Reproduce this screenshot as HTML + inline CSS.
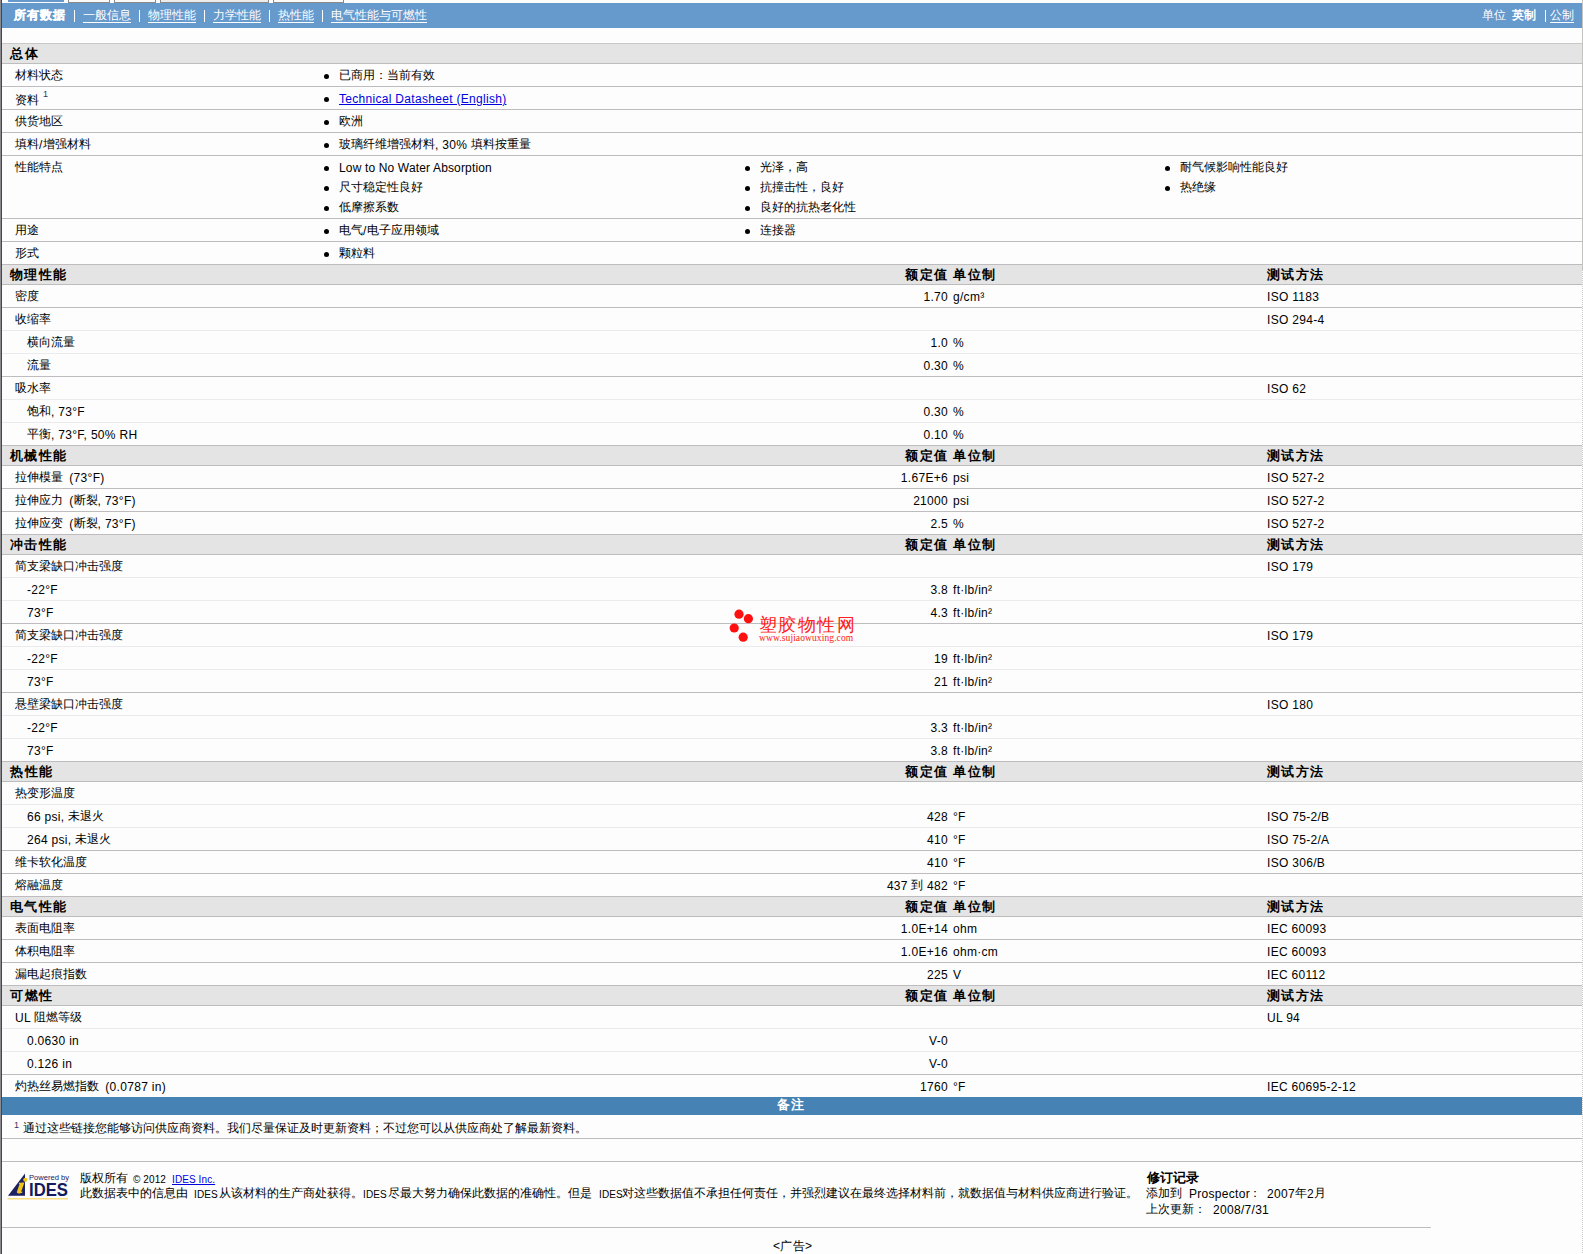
<!DOCTYPE html><html><head><meta charset="utf-8"><style>
*{margin:0;padding:0}
html,body{width:1583px;height:1254px;overflow:hidden;background:#fcfdfc}
body{position:relative;font-family:"Liberation Sans",sans-serif;font-size:12px;color:#000}
body>div,body>svg{position:absolute}
.t{white-space:nowrap;letter-spacing:0.3px;box-sizing:border-box;padding-top:1px}
.c{display:inline-block;font-weight:inherit;color:#000;letter-spacing:0;position:relative;top:-1px;text-align:justify;text-align-last:justify}
.nw,.nw .c{color:#fff}
.b{font-weight:bold}
.nbold .c{letter-spacing:1px;-webkit-text-stroke:0.4px #fff}
.u{text-decoration:underline;text-underline-offset:2px}
.u .c{text-decoration:underline;text-underline-offset:3px}
.sm{font-size:10px;letter-spacing:0.1px}
a .c{color:inherit}
.hb{font-weight:bold;font-size:13px;letter-spacing:1px}
.hb .c{color:#000}
.nb,.nb .c{color:#fff;font-weight:bold;font-size:13px;letter-spacing:1px}
a{color:#0000e0;text-decoration:underline}
.sup{font-size:9px;line-height:9px;color:#333366}
.dot{width:5px;height:5px;border-radius:50%;background:#000}
.wm{font-size:18px;line-height:18px;color:#ff2020;letter-spacing:1.4px;font-weight:normal}
.wm .c{top:0;letter-spacing:1px}
.wm .c{color:#ff2020}
.wm2{font-family:"Liberation Serif",serif;font-size:9.5px;line-height:10px;color:#ff2020;letter-spacing:0.1px}
</style></head><body>
<div style="left:8px;top:0px;width:56px;height:2px;background:#6699cc"></div>
<div style="left:68px;top:-8px;width:40px;height:10px;border:1px solid #8a8a8a;border-top:0;background:#fbfbfb"></div>
<div style="left:114px;top:-8px;width:40px;height:10px;border:1px solid #8a8a8a;border-top:0;background:#fbfbfb"></div>
<div style="left:160px;top:-8px;width:107px;height:10px;border:1px solid #8a8a8a;border-top:0;background:#ececec"></div>
<div style="left:273px;top:-8px;width:69px;height:10px;border:1px solid #8a8a8a;border-top:0;background:#fbfbfb"></div>
<div style="left:2px;top:3px;width:1580px;height:25px;background:#6699cc"></div>
<div class="t nw b nbold" style="left:14px;top:3px;height:25px;line-height:25px;"><b class="c" style="width:52px">所有数据</b></div>
<div style="left:74px;top:10px;width:1px;height:12px;background:#ffffff"></div>
<div style="left:139px;top:10px;width:1px;height:12px;background:#ffffff"></div>
<div style="left:204px;top:10px;width:1px;height:12px;background:#ffffff"></div>
<div style="left:269px;top:10px;width:1px;height:12px;background:#ffffff"></div>
<div style="left:322px;top:10px;width:1px;height:12px;background:#ffffff"></div>
<div class="t nw u" style="left:83px;top:3px;height:25px;line-height:25px;"><b class="c" style="width:48px">一般信息</b></div>
<div class="t nw u" style="left:148px;top:3px;height:25px;line-height:25px;"><b class="c" style="width:48px">物理性能</b></div>
<div class="t nw u" style="left:213px;top:3px;height:25px;line-height:25px;"><b class="c" style="width:48px">力学性能</b></div>
<div class="t nw u" style="left:278px;top:3px;height:25px;line-height:25px;"><b class="c" style="width:36px">热性能</b></div>
<div class="t nw u" style="left:331px;top:3px;height:25px;line-height:25px;"><b class="c" style="width:96px">电气性能与可燃性</b></div>
<div class="t nw" style="left:1482px;top:3px;height:25px;line-height:25px;"><b class="c" style="width:24px">单位</b></div>
<div class="t nw b" style="left:1512px;top:3px;height:25px;line-height:25px;"><b class="c" style="width:24px">英制</b></div>
<div style="left:1545px;top:10px;width:1px;height:12px;background:#ffffff"></div>
<div class="t nw u" style="left:1550px;top:3px;height:25px;line-height:25px;"><b class="c" style="width:24px">公制</b></div>
<div style="left:2px;top:43px;width:1580px;height:1px;background:#c8c9c6"></div>
<div style="left:2px;top:44px;width:1580px;height:19px;background:#e3e4e3"></div>
<div class="t hb" style="left:10px;top:44px;height:19px;line-height:19px;"><b class="c" style="width:28px">总体</b></div>
<div style="left:2px;top:63px;width:1580px;height:1px;background:#bdbdbd"></div>
<div class="t" style="left:15px;top:65px;height:20px;line-height:20px;"><b class="c" style="width:48px">材料状态</b></div>
<div class="dot" style="left:324px;top:74px"></div>
<div class="t" style="left:339px;top:65px;height:20px;line-height:20px;"><b class="c" style="width:96px">已商用：当前有效</b></div>
<div style="left:2px;top:86px;width:1580px;height:1px;background:#bebcbe"></div>
<div class="t" style="left:15px;top:90px;height:20px;line-height:20px;"><b class="c" style="width:24px">资料</b></div>
<div class="t sup" style="left:43px;top:89px">1</div>
<div class="dot" style="left:324px;top:97px"></div>
<div class="t" style="left:339px;top:88px;height:20px;line-height:20px;"><a>Technical Datasheet (English)</a></div>
<div style="left:2px;top:109px;width:1580px;height:1px;background:#bebcbe"></div>
<div class="t" style="left:15px;top:111px;height:20px;line-height:20px;"><b class="c" style="width:48px">供货地区</b></div>
<div class="dot" style="left:324px;top:120px"></div>
<div class="t" style="left:339px;top:111px;height:20px;line-height:20px;"><b class="c" style="width:24px">欧洲</b></div>
<div style="left:2px;top:132px;width:1580px;height:1px;background:#bebcbe"></div>
<div class="t" style="left:15px;top:134px;height:20px;line-height:20px;"><b class="c" style="width:24px">填料</b>/<b class="c" style="width:48px">增强材料</b></div>
<div class="dot" style="left:324px;top:143px"></div>
<div class="t" style="left:339px;top:134px;height:20px;line-height:20px;"><b class="c" style="width:96px">玻璃纤维增强材料</b>, 30% <b class="c" style="width:60px">填料按重量</b></div>
<div style="left:2px;top:155px;width:1580px;height:1px;background:#bebcbe"></div>
<div class="t" style="left:15px;top:157px;height:20px;line-height:20px;"><b class="c" style="width:48px">性能特点</b></div>
<div class="dot" style="left:324px;top:166px"></div>
<div class="t" style="left:339px;top:157px;height:20px;line-height:20px;"><span style="letter-spacing:0.15px">Low to No Water Absorption</span></div>
<div class="dot" style="left:324px;top:186px"></div>
<div class="t" style="left:339px;top:177px;height:20px;line-height:20px;"><b class="c" style="width:84px">尺寸稳定性良好</b></div>
<div class="dot" style="left:324px;top:206px"></div>
<div class="t" style="left:339px;top:197px;height:20px;line-height:20px;"><b class="c" style="width:60px">低摩擦系数</b></div>
<div class="dot" style="left:745px;top:166px"></div>
<div class="t" style="left:760px;top:157px;height:20px;line-height:20px;"><b class="c" style="width:48px">光泽，高</b></div>
<div class="dot" style="left:745px;top:186px"></div>
<div class="t" style="left:760px;top:177px;height:20px;line-height:20px;"><b class="c" style="width:84px">抗撞击性，良好</b></div>
<div class="dot" style="left:745px;top:206px"></div>
<div class="t" style="left:760px;top:197px;height:20px;line-height:20px;"><b class="c" style="width:96px">良好的抗热老化性</b></div>
<div class="dot" style="left:1165px;top:166px"></div>
<div class="t" style="left:1180px;top:157px;height:20px;line-height:20px;"><b class="c" style="width:108px">耐气候影响性能良好</b></div>
<div class="dot" style="left:1165px;top:186px"></div>
<div class="t" style="left:1180px;top:177px;height:20px;line-height:20px;"><b class="c" style="width:36px">热绝缘</b></div>
<div style="left:2px;top:218px;width:1580px;height:1px;background:#bebcbe"></div>
<div class="t" style="left:15px;top:220px;height:20px;line-height:20px;"><b class="c" style="width:24px">用途</b></div>
<div class="dot" style="left:324px;top:229px"></div>
<div class="t" style="left:339px;top:220px;height:20px;line-height:20px;"><b class="c" style="width:24px">电气</b>/<b class="c" style="width:72px">电子应用领域</b></div>
<div class="dot" style="left:745px;top:229px"></div>
<div class="t" style="left:760px;top:220px;height:20px;line-height:20px;"><b class="c" style="width:36px">连接器</b></div>
<div style="left:2px;top:241px;width:1580px;height:1px;background:#bebcbe"></div>
<div class="t" style="left:15px;top:243px;height:20px;line-height:20px;"><b class="c" style="width:24px">形式</b></div>
<div class="dot" style="left:324px;top:252px"></div>
<div class="t" style="left:339px;top:243px;height:20px;line-height:20px;"><b class="c" style="width:36px">颗粒料</b></div>
<div style="left:2px;top:264px;width:1580px;height:1px;background:#bebcbe"></div>
<div style="left:2px;top:265px;width:1580px;height:19px;background:#e3e4e3"></div>
<div class="t hb" style="left:10px;top:265px;height:19px;line-height:19px;"><b class="c" style="width:56px">物理性能</b></div>
<div class="t hb" style="right:636px;top:265px;height:19px;line-height:19px;"><b class="c" style="width:42px">额定值</b></div>
<div class="t hb" style="left:953px;top:265px;height:19px;line-height:19px;"><b class="c" style="width:42px">单位制</b></div>
<div class="t hb" style="left:1267px;top:265px;height:19px;line-height:19px;"><b class="c" style="width:56px">测试方法</b></div>
<div style="left:2px;top:284px;width:1580px;height:1px;background:#bdbdbd"></div>
<div class="t" style="left:15px;top:285px;height:22px;line-height:22px;"><b class="c" style="width:24px">密度</b></div>
<div class="t" style="right:635px;top:285px;height:22px;line-height:22px;">1.70</div>
<div class="t" style="left:953px;top:285px;height:22px;line-height:22px;">g/cm³</div>
<div class="t" style="left:1267px;top:285px;height:22px;line-height:22px;">ISO 1183</div>
<div style="left:2px;top:307px;width:1580px;height:1px;background:#bebcbe"></div>
<div class="t" style="left:15px;top:308px;height:22px;line-height:22px;"><b class="c" style="width:36px">收缩率</b></div>
<div class="t" style="left:1267px;top:308px;height:22px;line-height:22px;">ISO 294-4</div>
<div style="left:2px;top:330px;width:1580px;height:1px;background:#ebeaec"></div>
<div class="t" style="left:27px;top:331px;height:22px;line-height:22px;"><b class="c" style="width:48px">横向流量</b></div>
<div class="t" style="right:635px;top:331px;height:22px;line-height:22px;">1.0</div>
<div class="t" style="left:953px;top:331px;height:22px;line-height:22px;">%</div>
<div style="left:2px;top:353px;width:1580px;height:1px;background:#ebeaec"></div>
<div class="t" style="left:27px;top:354px;height:22px;line-height:22px;"><b class="c" style="width:24px">流量</b></div>
<div class="t" style="right:635px;top:354px;height:22px;line-height:22px;">0.30</div>
<div class="t" style="left:953px;top:354px;height:22px;line-height:22px;">%</div>
<div style="left:2px;top:376px;width:1580px;height:1px;background:#bebcbe"></div>
<div class="t" style="left:15px;top:377px;height:22px;line-height:22px;"><b class="c" style="width:36px">吸水率</b></div>
<div class="t" style="left:1267px;top:377px;height:22px;line-height:22px;">ISO 62</div>
<div style="left:2px;top:399px;width:1580px;height:1px;background:#ebeaec"></div>
<div class="t" style="left:27px;top:400px;height:22px;line-height:22px;"><b class="c" style="width:24px">饱和</b>, 73°F</div>
<div class="t" style="right:635px;top:400px;height:22px;line-height:22px;">0.30</div>
<div class="t" style="left:953px;top:400px;height:22px;line-height:22px;">%</div>
<div style="left:2px;top:422px;width:1580px;height:1px;background:#ebeaec"></div>
<div class="t" style="left:27px;top:423px;height:22px;line-height:22px;"><b class="c" style="width:24px">平衡</b>, 73°F, 50% RH</div>
<div class="t" style="right:635px;top:423px;height:22px;line-height:22px;">0.10</div>
<div class="t" style="left:953px;top:423px;height:22px;line-height:22px;">%</div>
<div style="left:2px;top:445px;width:1580px;height:1px;background:#bebcbe"></div>
<div style="left:2px;top:446px;width:1580px;height:19px;background:#e3e4e3"></div>
<div class="t hb" style="left:10px;top:446px;height:19px;line-height:19px;"><b class="c" style="width:56px">机械性能</b></div>
<div class="t hb" style="right:636px;top:446px;height:19px;line-height:19px;"><b class="c" style="width:42px">额定值</b></div>
<div class="t hb" style="left:953px;top:446px;height:19px;line-height:19px;"><b class="c" style="width:42px">单位制</b></div>
<div class="t hb" style="left:1267px;top:446px;height:19px;line-height:19px;"><b class="c" style="width:56px">测试方法</b></div>
<div style="left:2px;top:465px;width:1580px;height:1px;background:#bdbdbd"></div>
<div class="t" style="left:15px;top:466px;height:22px;line-height:22px;"><b class="c" style="width:48px">拉伸模量</b> (73°F)</div>
<div class="t" style="right:635px;top:466px;height:22px;line-height:22px;">1.67E+6</div>
<div class="t" style="left:953px;top:466px;height:22px;line-height:22px;">psi</div>
<div class="t" style="left:1267px;top:466px;height:22px;line-height:22px;">ISO 527-2</div>
<div style="left:2px;top:488px;width:1580px;height:1px;background:#bebcbe"></div>
<div class="t" style="left:15px;top:489px;height:22px;line-height:22px;"><b class="c" style="width:48px">拉伸应力</b> (<b class="c" style="width:24px">断裂</b>, 73°F)</div>
<div class="t" style="right:635px;top:489px;height:22px;line-height:22px;">21000</div>
<div class="t" style="left:953px;top:489px;height:22px;line-height:22px;">psi</div>
<div class="t" style="left:1267px;top:489px;height:22px;line-height:22px;">ISO 527-2</div>
<div style="left:2px;top:511px;width:1580px;height:1px;background:#bebcbe"></div>
<div class="t" style="left:15px;top:512px;height:22px;line-height:22px;"><b class="c" style="width:48px">拉伸应变</b> (<b class="c" style="width:24px">断裂</b>, 73°F)</div>
<div class="t" style="right:635px;top:512px;height:22px;line-height:22px;">2.5</div>
<div class="t" style="left:953px;top:512px;height:22px;line-height:22px;">%</div>
<div class="t" style="left:1267px;top:512px;height:22px;line-height:22px;">ISO 527-2</div>
<div style="left:2px;top:534px;width:1580px;height:1px;background:#bebcbe"></div>
<div style="left:2px;top:535px;width:1580px;height:19px;background:#e3e4e3"></div>
<div class="t hb" style="left:10px;top:535px;height:19px;line-height:19px;"><b class="c" style="width:56px">冲击性能</b></div>
<div class="t hb" style="right:636px;top:535px;height:19px;line-height:19px;"><b class="c" style="width:42px">额定值</b></div>
<div class="t hb" style="left:953px;top:535px;height:19px;line-height:19px;"><b class="c" style="width:42px">单位制</b></div>
<div class="t hb" style="left:1267px;top:535px;height:19px;line-height:19px;"><b class="c" style="width:56px">测试方法</b></div>
<div style="left:2px;top:554px;width:1580px;height:1px;background:#bdbdbd"></div>
<div class="t" style="left:15px;top:555px;height:22px;line-height:22px;"><b class="c" style="width:108px">简支梁缺口冲击强度</b></div>
<div class="t" style="left:1267px;top:555px;height:22px;line-height:22px;">ISO 179</div>
<div style="left:2px;top:577px;width:1580px;height:1px;background:#ebeaec"></div>
<div class="t" style="left:27px;top:578px;height:22px;line-height:22px;">-22°F</div>
<div class="t" style="right:635px;top:578px;height:22px;line-height:22px;">3.8</div>
<div class="t" style="left:953px;top:578px;height:22px;line-height:22px;">ft·lb/in²</div>
<div style="left:2px;top:600px;width:1580px;height:1px;background:#ebeaec"></div>
<div class="t" style="left:27px;top:601px;height:22px;line-height:22px;">73°F</div>
<div class="t" style="right:635px;top:601px;height:22px;line-height:22px;">4.3</div>
<div class="t" style="left:953px;top:601px;height:22px;line-height:22px;">ft·lb/in²</div>
<div style="left:2px;top:623px;width:1580px;height:1px;background:#bebcbe"></div>
<div class="t" style="left:15px;top:624px;height:22px;line-height:22px;"><b class="c" style="width:108px">简支梁缺口冲击强度</b></div>
<div class="t" style="left:1267px;top:624px;height:22px;line-height:22px;">ISO 179</div>
<div style="left:2px;top:646px;width:1580px;height:1px;background:#ebeaec"></div>
<div class="t" style="left:27px;top:647px;height:22px;line-height:22px;">-22°F</div>
<div class="t" style="right:635px;top:647px;height:22px;line-height:22px;">19</div>
<div class="t" style="left:953px;top:647px;height:22px;line-height:22px;">ft·lb/in²</div>
<div style="left:2px;top:669px;width:1580px;height:1px;background:#ebeaec"></div>
<div class="t" style="left:27px;top:670px;height:22px;line-height:22px;">73°F</div>
<div class="t" style="right:635px;top:670px;height:22px;line-height:22px;">21</div>
<div class="t" style="left:953px;top:670px;height:22px;line-height:22px;">ft·lb/in²</div>
<div style="left:2px;top:692px;width:1580px;height:1px;background:#bebcbe"></div>
<div class="t" style="left:15px;top:693px;height:22px;line-height:22px;"><b class="c" style="width:108px">悬壁梁缺口冲击强度</b></div>
<div class="t" style="left:1267px;top:693px;height:22px;line-height:22px;">ISO 180</div>
<div style="left:2px;top:715px;width:1580px;height:1px;background:#ebeaec"></div>
<div class="t" style="left:27px;top:716px;height:22px;line-height:22px;">-22°F</div>
<div class="t" style="right:635px;top:716px;height:22px;line-height:22px;">3.3</div>
<div class="t" style="left:953px;top:716px;height:22px;line-height:22px;">ft·lb/in²</div>
<div style="left:2px;top:738px;width:1580px;height:1px;background:#ebeaec"></div>
<div class="t" style="left:27px;top:739px;height:22px;line-height:22px;">73°F</div>
<div class="t" style="right:635px;top:739px;height:22px;line-height:22px;">3.8</div>
<div class="t" style="left:953px;top:739px;height:22px;line-height:22px;">ft·lb/in²</div>
<div style="left:2px;top:761px;width:1580px;height:1px;background:#bebcbe"></div>
<div style="left:2px;top:762px;width:1580px;height:19px;background:#e3e4e3"></div>
<div class="t hb" style="left:10px;top:762px;height:19px;line-height:19px;"><b class="c" style="width:42px">热性能</b></div>
<div class="t hb" style="right:636px;top:762px;height:19px;line-height:19px;"><b class="c" style="width:42px">额定值</b></div>
<div class="t hb" style="left:953px;top:762px;height:19px;line-height:19px;"><b class="c" style="width:42px">单位制</b></div>
<div class="t hb" style="left:1267px;top:762px;height:19px;line-height:19px;"><b class="c" style="width:56px">测试方法</b></div>
<div style="left:2px;top:781px;width:1580px;height:1px;background:#bdbdbd"></div>
<div class="t" style="left:15px;top:782px;height:22px;line-height:22px;"><b class="c" style="width:60px">热变形温度</b></div>
<div style="left:2px;top:804px;width:1580px;height:1px;background:#ebeaec"></div>
<div class="t" style="left:27px;top:805px;height:22px;line-height:22px;">66 psi, <b class="c" style="width:36px">未退火</b></div>
<div class="t" style="right:635px;top:805px;height:22px;line-height:22px;">428</div>
<div class="t" style="left:953px;top:805px;height:22px;line-height:22px;">°F</div>
<div class="t" style="left:1267px;top:805px;height:22px;line-height:22px;">ISO 75-2/B</div>
<div style="left:2px;top:827px;width:1580px;height:1px;background:#ebeaec"></div>
<div class="t" style="left:27px;top:828px;height:22px;line-height:22px;">264 psi, <b class="c" style="width:36px">未退火</b></div>
<div class="t" style="right:635px;top:828px;height:22px;line-height:22px;">410</div>
<div class="t" style="left:953px;top:828px;height:22px;line-height:22px;">°F</div>
<div class="t" style="left:1267px;top:828px;height:22px;line-height:22px;">ISO 75-2/A</div>
<div style="left:2px;top:850px;width:1580px;height:1px;background:#bebcbe"></div>
<div class="t" style="left:15px;top:851px;height:22px;line-height:22px;"><b class="c" style="width:72px">维卡软化温度</b></div>
<div class="t" style="right:635px;top:851px;height:22px;line-height:22px;">410</div>
<div class="t" style="left:953px;top:851px;height:22px;line-height:22px;">°F</div>
<div class="t" style="left:1267px;top:851px;height:22px;line-height:22px;">ISO 306/B</div>
<div style="left:2px;top:873px;width:1580px;height:1px;background:#bebcbe"></div>
<div class="t" style="left:15px;top:874px;height:22px;line-height:22px;"><b class="c" style="width:48px">熔融温度</b></div>
<div class="t" style="right:635px;top:874px;height:22px;line-height:22px;">437 <b class="c" style="width:12px">到</b> 482</div>
<div class="t" style="left:953px;top:874px;height:22px;line-height:22px;">°F</div>
<div style="left:2px;top:896px;width:1580px;height:1px;background:#bebcbe"></div>
<div style="left:2px;top:897px;width:1580px;height:19px;background:#e3e4e3"></div>
<div class="t hb" style="left:10px;top:897px;height:19px;line-height:19px;"><b class="c" style="width:56px">电气性能</b></div>
<div class="t hb" style="right:636px;top:897px;height:19px;line-height:19px;"><b class="c" style="width:42px">额定值</b></div>
<div class="t hb" style="left:953px;top:897px;height:19px;line-height:19px;"><b class="c" style="width:42px">单位制</b></div>
<div class="t hb" style="left:1267px;top:897px;height:19px;line-height:19px;"><b class="c" style="width:56px">测试方法</b></div>
<div style="left:2px;top:916px;width:1580px;height:1px;background:#bdbdbd"></div>
<div class="t" style="left:15px;top:917px;height:22px;line-height:22px;"><b class="c" style="width:60px">表面电阻率</b></div>
<div class="t" style="right:635px;top:917px;height:22px;line-height:22px;">1.0E+14</div>
<div class="t" style="left:953px;top:917px;height:22px;line-height:22px;">ohm</div>
<div class="t" style="left:1267px;top:917px;height:22px;line-height:22px;">IEC 60093</div>
<div style="left:2px;top:939px;width:1580px;height:1px;background:#bebcbe"></div>
<div class="t" style="left:15px;top:940px;height:22px;line-height:22px;"><b class="c" style="width:60px">体积电阻率</b></div>
<div class="t" style="right:635px;top:940px;height:22px;line-height:22px;">1.0E+16</div>
<div class="t" style="left:953px;top:940px;height:22px;line-height:22px;">ohm·cm</div>
<div class="t" style="left:1267px;top:940px;height:22px;line-height:22px;">IEC 60093</div>
<div style="left:2px;top:962px;width:1580px;height:1px;background:#bebcbe"></div>
<div class="t" style="left:15px;top:963px;height:22px;line-height:22px;"><b class="c" style="width:72px">漏电起痕指数</b></div>
<div class="t" style="right:635px;top:963px;height:22px;line-height:22px;">225</div>
<div class="t" style="left:953px;top:963px;height:22px;line-height:22px;">V</div>
<div class="t" style="left:1267px;top:963px;height:22px;line-height:22px;">IEC 60112</div>
<div style="left:2px;top:985px;width:1580px;height:1px;background:#bebcbe"></div>
<div style="left:2px;top:986px;width:1580px;height:19px;background:#e3e4e3"></div>
<div class="t hb" style="left:10px;top:986px;height:19px;line-height:19px;"><b class="c" style="width:42px">可燃性</b></div>
<div class="t hb" style="right:636px;top:986px;height:19px;line-height:19px;"><b class="c" style="width:42px">额定值</b></div>
<div class="t hb" style="left:953px;top:986px;height:19px;line-height:19px;"><b class="c" style="width:42px">单位制</b></div>
<div class="t hb" style="left:1267px;top:986px;height:19px;line-height:19px;"><b class="c" style="width:56px">测试方法</b></div>
<div style="left:2px;top:1005px;width:1580px;height:1px;background:#bdbdbd"></div>
<div class="t" style="left:15px;top:1006px;height:22px;line-height:22px;">UL <b class="c" style="width:48px">阻燃等级</b></div>
<div class="t" style="left:1267px;top:1006px;height:22px;line-height:22px;">UL 94</div>
<div style="left:2px;top:1028px;width:1580px;height:1px;background:#ebeaec"></div>
<div class="t" style="left:27px;top:1029px;height:22px;line-height:22px;">0.0630 in</div>
<div class="t" style="right:635px;top:1029px;height:22px;line-height:22px;">V-0</div>
<div style="left:2px;top:1051px;width:1580px;height:1px;background:#ebeaec"></div>
<div class="t" style="left:27px;top:1052px;height:22px;line-height:22px;">0.126 in</div>
<div class="t" style="right:635px;top:1052px;height:22px;line-height:22px;">V-0</div>
<div style="left:2px;top:1074px;width:1580px;height:1px;background:#bebcbe"></div>
<div class="t" style="left:15px;top:1075px;height:22px;line-height:22px;"><b class="c" style="width:84px">灼热丝易燃指数</b> (0.0787 in)</div>
<div class="t" style="right:635px;top:1075px;height:22px;line-height:22px;">1760</div>
<div class="t" style="left:953px;top:1075px;height:22px;line-height:22px;">°F</div>
<div class="t" style="left:1267px;top:1075px;height:22px;line-height:22px;">IEC 60695-2-12</div>
<div style="left:2px;top:1097px;width:1580px;height:18px;background:#4682b4"></div>
<div class="t nb" style="left:777px;top:1097px;height:15px;line-height:15px;"><b class="c" style="width:28px">备注</b></div>
<div class="t sup" style="left:14px;top:1120px">1</div>
<div class="t" style="left:23px;top:1117px;height:23px;line-height:23px;"><b class="c" style="width:564px">通过这些链接您能够访问供应商资料。我们尽量保证及时更新资料；不过您可以从供应商处了解最新资料。</b></div>
<div style="left:2px;top:1138px;width:1580px;height:1px;background:#bebcbe"></div>
<div style="left:2px;top:1161px;width:1580px;height:1px;background:#bebcbe"></div>
<div style="left:2px;top:1227px;width:1429px;height:1px;background:#bebcbe"></div>
<svg style="left:6px;top:1170px" width="66" height="32" viewBox="0 0 66 32">
<polygon points="2,25.8 19,3.5 19,25.8" fill="#1b2163"/>
<path d="M13.2,12.8 L18.4,12.5 L15.3,21.3 Q15.1,22.2 16.5,21.5 L16.1,22.8 Q14.6,23.7 12.2,23.4 Q10.4,23.2 10.9,21.8 L13.4,14.6 Q13.6,13.8 12.8,13.8 Z" fill="#f0c419"/>
<circle cx="19.3" cy="9.8" r="2.1" fill="#f0c419"/>
<text x="23" y="10" font-family="Liberation Sans" font-size="7.6" fill="#1b2163">Powered by</text>
<text x="23" y="26" font-family="Liberation Sans" font-weight="bold" font-size="19" fill="#141a5c" textLength="39" lengthAdjust="spacingAndGlyphs">IDES</text>
<rect x="1.5" y="28" width="60.5" height="1.5" fill="#f9dc80"/>
</svg>
<div class="t" style="left:80px;top:1170px;height:17px;line-height:17px;"><b class="c" style="width:48px">版权所有</b></div>
<div class="t sm" style="left:133px;top:1170px;height:17px;line-height:17px;">© 2012</div>
<div class="t sm" style="left:172px;top:1170px;height:17px;line-height:17px;"><a>IDES Inc.</a></div>
<div class="t" style="left:80px;top:1185px;height:17px;line-height:17px;"><b class="c" style="width:108px">此数据表中的信息由</b></div>
<div class="t sm" style="left:194px;top:1185px;height:17px;line-height:17px;">IDES</div>
<div class="t" style="left:219px;top:1185px;height:17px;line-height:17px;"><b class="c" style="width:144px">从该材料的生产商处获得。</b></div>
<div class="t sm" style="left:363px;top:1185px;height:17px;line-height:17px;">IDES</div>
<div class="t" style="left:388px;top:1185px;height:17px;line-height:17px;"><b class="c" style="width:204px">尽最大努力确保此数据的准确性。但是</b></div>
<div class="t sm" style="left:599px;top:1185px;height:17px;line-height:17px;">IDES</div>
<div class="t" style="left:622px;top:1185px;height:17px;line-height:17px;"><b class="c" style="width:516px">对这些数据值不承担任何责任，并强烈建议在最终选择材料前，就数据值与材料供应商进行验证。</b></div>
<div class="t hb" style="left:1147px;top:1169px;height:17px;line-height:17px;"><b class="c" style="width:52px">修订记录</b></div>
<div class="t" style="left:1146px;top:1185px;height:17px;line-height:17px;"><b class="c" style="width:36px">添加到</b></div>
<div class="t" style="left:1189px;top:1185px;height:17px;line-height:17px;">Prospector</div>
<div class="t" style="left:1249px;top:1185px;height:17px;line-height:17px;"><b class="c" style="width:12px">：</b></div>
<div class="t" style="left:1267px;top:1185px;height:17px;line-height:17px;">2007<b class="c" style="width:12px">年</b>2<b class="c" style="width:12px">月</b></div>
<div class="t" style="left:1146px;top:1201px;height:17px;line-height:17px;"><b class="c" style="width:60px">上次更新：</b></div>
<div class="t" style="left:1213px;top:1201px;height:17px;line-height:17px;">2008/7/31</div>
<div class="t" style="left:773px;top:1237px;height:17px;line-height:17px;">&lt;广告&gt;</div>
<svg style="left:728px;top:608px" width="130" height="38" viewBox="0 0 130 38">
<circle cx="11" cy="6.2" r="4.6" fill="#ff1010"/>
<circle cx="20.4" cy="10.7" r="4.6" fill="#ff1010"/>
<circle cx="6.2" cy="20" r="4.6" fill="#ff1010"/>
<circle cx="15.2" cy="29.2" r="4.6" fill="#ff1010"/>
</svg>
<div class="wm" style="left:759px;top:616px">塑胶物性网</div>
<div class="wm2" style="left:759px;top:633px">www.sujiaowuxing.com</div>
<div style="left:0px;top:0px;width:1px;height:1254px;background:#8a8a8e"></div>
<div style="left:1px;top:0px;width:1px;height:1254px;background:#48464a"></div>
<div style="left:1582px;top:0px;width:1px;height:270px;background:#c4c3c0"></div>
<div style="left:1582px;top:270px;width:1px;height:984px;background:repeating-linear-gradient(180deg,#cbc8c3 0 1px,#ffffff 1px 2px)"></div>
</body></html>
